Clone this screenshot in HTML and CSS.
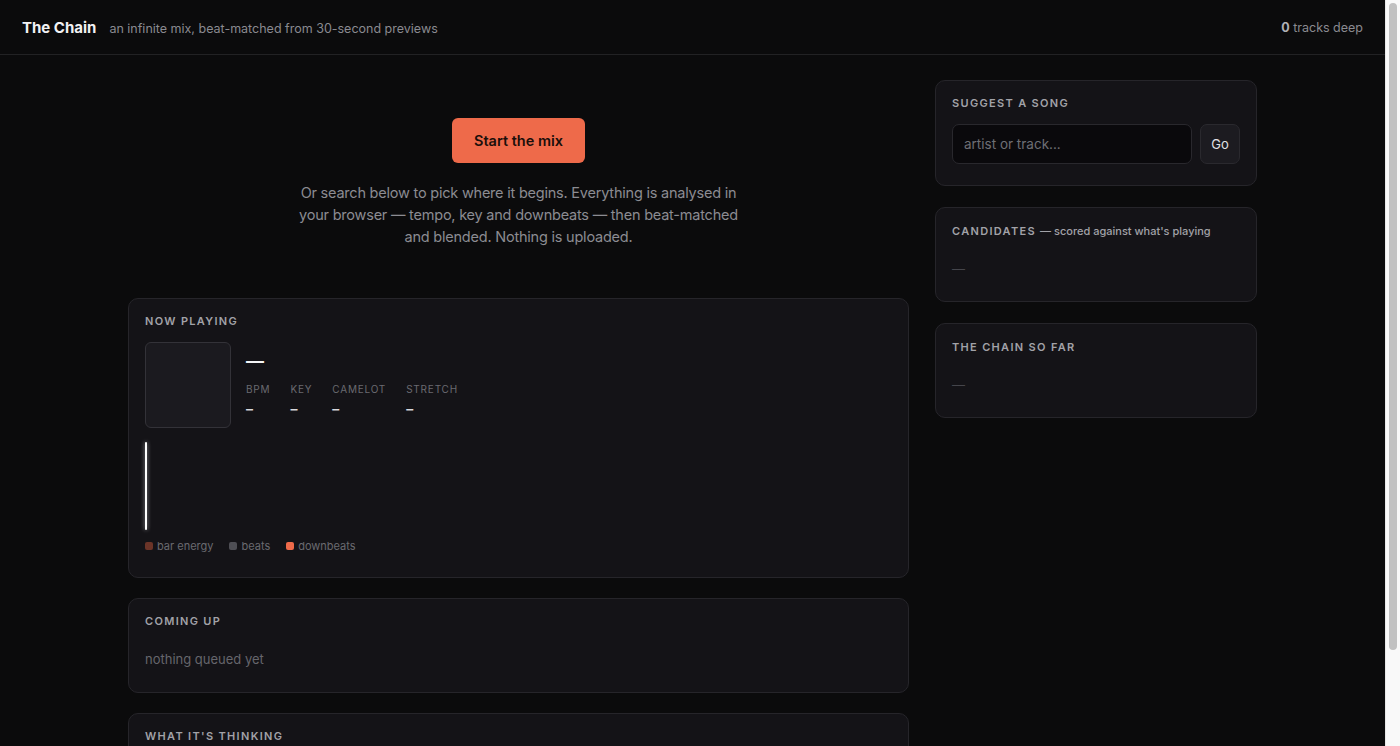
FILE: index.html
```html
<!DOCTYPE html>
<html lang="en">
<head>
    <meta charset="UTF-8">
    <meta name="viewport" content="width=device-width, initial-scale=1.0">
    <title>The Chain</title>
    <link rel="stylesheet" href="styles.css">
</head>
<body>

<div class="page">
    <header class="topbar">
        <div class="brand">
            <span class="brand-name">The Chain</span>
            <span class="brand-tag">an infinite mix, beat-matched from 30-second previews</span>
        </div>
        <div class="depth"><b>0</b> tracks deep</div>
    </header>

    <main class="layout">
        <div class="col-main">
            <section class="hero">
                <button class="start-button">Start the mix</button>
                <p class="hero-text">Or search below to pick where it begins. Everything is analysed in your browser — tempo, key and downbeats — then beat-matched and blended. Nothing is uploaded.</p>
            </section>

            <section class="card now-playing">
                <div class="card-label">Now playing</div>
                <div class="track">
                    <div class="art"></div>
                    <div class="track-info">
                        <div class="track-title">—</div>
                        <div class="stats">
                            <div class="stat"><span class="stat-label">BPM</span><span class="stat-value">–</span></div>
                            <div class="stat"><span class="stat-label">Key</span><span class="stat-value">–</span></div>
                            <div class="stat"><span class="stat-label">Camelot</span><span class="stat-value">–</span></div>
                            <div class="stat"><span class="stat-label">Stretch</span><span class="stat-value">–</span></div>
                        </div>
                    </div>
                </div>
                <div class="wave">
                    <div class="playhead"></div>
                </div>
                <div class="legend">
                    <span class="legend-item"><i class="swatch energy"></i>bar energy</span>
                    <span class="legend-item"><i class="swatch beats"></i>beats</span>
                    <span class="legend-item"><i class="swatch downbeats"></i>downbeats</span>
                </div>
            </section>

            <section class="card">
                <div class="card-label">Coming up</div>
                <div class="muted-text">nothing queued yet</div>
            </section>

            <section class="card">
                <div class="card-label">What it's thinking</div>
                <div class="muted-text">waiting for the first track</div>
            </section>
        </div>

        <aside class="col-side">
            <section class="card suggest-card">
                <div class="card-label">Suggest a song</div>
                <form class="suggest" onsubmit="return false">
                    <input type="text" class="suggest-input" placeholder="artist or track...">
                    <button class="go-button">Go</button>
                </form>
            </section>

            <section class="card side-card">
                <div class="card-label">Candidates <span class="label-note">— scored against what's playing</span></div>
                <div class="empty-dash">—</div>
            </section>

            <section class="card side-card">
                <div class="card-label">The chain so far</div>
                <div class="empty-dash">—</div>
            </section>
        </aside>
    </main>
</div>

<!-- the browser's own scrollbar, as it shows in the capture -->
<div class="scrollbar"><div class="scroll-thumb"></div></div>

</body>
</html>
```

FILE: styles.css
```css
body {
    margin: 0;
    font-family: 'Inter', 'Noto Sans', sans-serif;
    background: #0b0b0c;
    color: #e8e8ea;
    height: 746px;
    overflow: hidden;
}

.page {
    margin-right: 15px;
}

.topbar {
    height: 54px;
    padding: 0 22px;
    display: flex;
    align-items: center;
    justify-content: space-between;
    border-bottom: 1px solid #222224;
}

.brand {
    display: flex;
    align-items: baseline;
    gap: 13px;
}

.brand-name {
    font-size: 15px;
    font-weight: 700;
    color: #f2f2f4;
}

.brand-tag {
    font-size: 12.5px;
    color: #8a8a90;
}

.depth {
    font-size: 12.5px;
    color: #8a8a90;
}

.depth b {
    color: #b0b0b6;
}

.layout {
    width: 1129px;
    margin: 0 auto;
    padding-top: 25px;
    display: grid;
    grid-template-columns: 1fr 322px;
    gap: 26px;
    align-items: start;
}

.col-main,
.col-side {
    display: flex;
    flex-direction: column;
    gap: 21px;
}

.col-main {
    gap: 20px;
}

.hero {
    display: flex;
    flex-direction: column;
    align-items: center;
    padding: 38px 0 30px;
}

.start-button {
    height: 45px;
    padding: 0 22px;
    font-family: inherit;
    font-size: 14.5px;
    font-weight: 600;
    color: #1a0f0b;
    background: #ee6a4a;
    border: none;
    border-radius: 6px;
    cursor: pointer;
}

.hero-text {
    max-width: 450px;
    margin: 19px 0 0;
    text-align: center;
    font-size: 14.5px;
    letter-spacing: -0.015em;
    line-height: 22px;
    color: #8c8c92;
}

.card {
    background: #141317;
    border: 1px solid #26252a;
    border-radius: 10px;
    padding: 15px 16px 25px;
}

.now-playing {
    padding-bottom: 24px;
}

.suggest-card {
    padding-bottom: 21px;
}

.side-card {
    padding-top: 16px;
    padding-bottom: 24px;
}

.card-label {
    font-size: 11px;
    font-weight: 600;
    letter-spacing: 0.12em;
    text-transform: uppercase;
    color: #a2a2a8;
    line-height: 14px;
}

.label-note {
    letter-spacing: 0;
    text-transform: none;
    font-weight: 500;
}

.muted-text {
    margin-top: 23px;
    font-size: 13px;
    color: #66666c;
}

.empty-dash {
    margin-top: 23px;
    font-size: 13px;
    color: #45454b;
}

.track {
    display: flex;
    gap: 15px;
    margin-top: 14px;
}

.art {
    width: 84px;
    height: 84px;
    background: #1b1a1f;
    border: 1px solid #333238;
    border-radius: 6px;
}

.track-info {
    padding-top: 7px;
}

.track-title {
    font-size: 18px;
    font-weight: 700;
    color: #f4f4f6;
    line-height: 24px;
}

.stats {
    display: flex;
    gap: 20px;
    margin-top: 10px;
}

.stat {
    display: flex;
    flex-direction: column;
    gap: 5px;
}

.stat-label {
    font-size: 10px;
    letter-spacing: 0.08em;
    text-transform: uppercase;
    color: #6a6a70;
}

.stat-value {
    font-size: 14px;
    font-weight: 600;
    color: #d8d8dc;
}

.wave {
    height: 88px;
    margin-top: 14px;
    position: relative;
}

.playhead {
    position: absolute;
    left: 0;
    top: 0;
    width: 2px;
    height: 100%;
    background: #ffffff;
    border-radius: 1px;
    box-shadow: 0 0 4px rgba(255, 255, 255, 0.6);
}

.legend {
    display: flex;
    gap: 16px;
    margin-top: 9px;
    font-size: 11px;
    color: #6a6a70;
}

.legend-item {
    display: flex;
    align-items: center;
    gap: 4px;
}

.swatch {
    width: 8px;
    height: 8px;
    border-radius: 2px;
}

.swatch.energy { background: #6b3428; }
.swatch.beats { background: #4e4e54; }
.swatch.downbeats { background: #ee6a4a; }

.suggest {
    display: flex;
    gap: 8px;
    margin-top: 14px;
}

.suggest-input {
    flex: 1;
    height: 40px;
    box-sizing: border-box;
    padding: 0 11px;
    font-family: inherit;
    font-size: 13.5px;
    color: #e8e8ea;
    background: #0a090c;
    border: 1px solid #29282d;
    border-radius: 7px;
    outline: none;
}

.suggest-input::placeholder {
    color: #6e6e74;
}

.go-button {
    width: 44px;
    height: 40px;
    font-family: inherit;
    font-size: 13px;
    color: #e0e0e4;
    background: #1c1b20;
    border: 1px solid #2a292e;
    border-radius: 7px;
    cursor: pointer;
}

.scrollbar {
    position: fixed;
    top: 0;
    right: 0;
    width: 14px;
    height: 100%;
    background: #f9f9f9;
    border-left: 1px solid #e8e8e8;
}

.scroll-thumb {
    width: 8px;
    height: 647px;
    margin: 3px auto 0;
    background: #c1c1c1;
    border-radius: 4px;
}
```
